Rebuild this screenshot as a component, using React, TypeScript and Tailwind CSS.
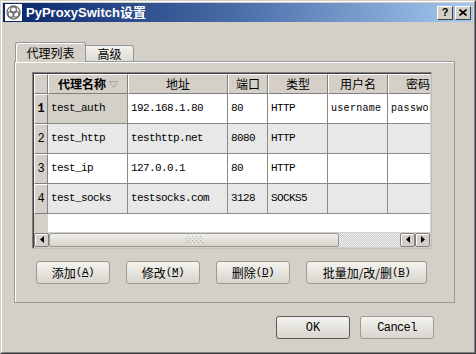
import React from 'react';

const cjk = { fontFamily: '"Noto Sans CJK SC", "Liberation Sans", sans-serif' };
const mono = { fontFamily: '"Liberation Mono", "Noto Sans CJK SC", monospace' };

const columns = [
  { label: '代理名称', w: 'w-[80px]', bold: true },
  { label: '地址', w: 'w-[100px]' },
  { label: '端口', w: 'w-[40px]' },
  { label: '类型', w: 'w-[60px]' },
  { label: '用户名', w: 'w-[60px]' },
  { label: '密码', w: 'w-[60px]' },
];

const rows = [
  ['test_auth', '192.168.1.80', '80', 'HTTP', 'username', 'password'],
  ['test_http', 'testhttp.net', '8080', 'HTTP', '', ''],
  ['test_ip', '127.0.0.1', '80', 'HTTP', '', ''],
  ['test_socks', 'testsocks.com', '3128', 'SOCKS5', '', ''],
];

function RaisedCell({ className = '', children }: { className?: string; children?: React.ReactNode }) {
  return (
    <div
      className={`flex items-center justify-center bg-[#d4d0c8] border-t border-l border-t-white border-l-white border-r border-b border-r-[#808080] border-b-[#808080] ${className}`}
    >
      {children}
    </div>
  );
}

function Arrow({ dir }: { dir: 'left' | 'right' }) {
  return (
    <svg width="4" height="7" viewBox="0 0 4 7">
      {dir === 'left' ? <path d="M4 0 L0 3.5 L4 7 Z" fill="#000" /> : <path d="M0 0 L4 3.5 L0 7 Z" fill="#000" />}
    </svg>
  );
}

function ScrollBtn({ dir }: { dir: 'left' | 'right' }) {
  return (
    <div className="w-[15px] h-[14px] flex items-center justify-center bg-[#d4d0c8] rounded-[2px] border border-[#808080] shadow-[inset_1px_1px_0_#fff]">
      <Arrow dir={dir} />
    </div>
  );
}

function Button({ children, w = 'w-[74px]', primary = false }: { children: React.ReactNode; w?: string; primary?: boolean }) {
  return (
    <div
      className={`${w} h-[23px] flex items-center justify-center rounded-[3px] border ${
        primary ? 'border-[#5a5a5a]' : 'border-[#9c9a94]'
      } bg-gradient-to-b from-[#f4f3ef] to-[#d8d5cd] text-[12px] text-black`}
      style={cjk}
    >
      {children}
    </div>
  );
}

function Mn({ c }: { c: string }) {
  return (
    <span className="text-[11px] tracking-[-0.5px]" style={mono}>
      (<span className="underline">{c}</span>)
    </span>
  );
}

export default function App() {
  return (
    <div className="w-[476px] h-[354px] bg-[#d4d0c8] border-t border-l border-t-[#d4d0c8] border-l-[#d4d0c8] border-r border-b border-r-[#404040] border-b-[#404040] overflow-hidden">
      <div className="h-full border-t border-l border-t-white border-l-white border-r border-b border-r-[#808080] border-b-[#808080] px-[1px] pt-[1px] flex flex-col">
        {/* title bar */}
        <div className="h-[19px] flex items-center bg-gradient-to-r from-[#0a246a] via-[#4a6ea8] to-[#a6caf0] pl-[2px] pr-[2px]">
          <div className="w-[17px] h-[17px] bg-white flex items-center justify-center">
            <svg width="15" height="15" viewBox="0 0 15 15">
              <circle cx="7.5" cy="7.5" r="6.5" fill="none" stroke="#6a6a6a" strokeWidth="1.3" />
              <circle cx="7.5" cy="5" r="3" fill="none" stroke="#6a6a6a" strokeWidth="1.2" />
              <circle cx="5" cy="9.3" r="3" fill="none" stroke="#6a6a6a" strokeWidth="1.2" />
              <circle cx="10" cy="9.3" r="3" fill="none" stroke="#6a6a6a" strokeWidth="1.2" />
            </svg>
          </div>
          <span className="ml-[4px] text-white font-bold text-[13px] leading-none" style={{ fontFamily: '"Liberation Sans", "Noto Sans CJK SC", sans-serif' }}>
            PyProxySwitch设置
          </span>
          <div className="ml-auto flex gap-[2px]">
            <div className="w-[16px] h-[14px] bg-[#d4d0c8] border-t border-l border-t-white border-l-white border-r border-b border-r-[#404040] border-b-[#404040] flex items-center justify-center text-[11px] font-bold leading-none" style={{ fontFamily: '"Liberation Sans", sans-serif' }}>
              ?
            </div>
            <div className="w-[16px] h-[14px] bg-[#d4d0c8] border-t border-l border-t-white border-l-white border-r border-b border-r-[#404040] border-b-[#404040] flex items-center justify-center">
              <svg width="8" height="7" viewBox="0 0 8 7">
                <path d="M0.5 0.5 L7.5 6.5 M7.5 0.5 L0.5 6.5" stroke="#000" strokeWidth="1.6" />
              </svg>
            </div>
          </div>
        </div>

        {/* tabs */}
        <div className="pl-[12px] pt-[20px] flex items-end">
          <div className="w-[71px] h-[20px] bg-[#d4d0c8] border border-b-0 border-[#919b9c] rounded-t-[3px] shadow-[inset_1px_1px_0_#fff] flex items-center justify-center text-[12px] text-black relative z-10 -mb-[1px]" style={cjk}>
            代理列表
          </div>
          <div className="w-[48px] h-[16px] bg-gradient-to-b from-[#f2f1ed] to-[#dedbd3] border border-b-0 border-l-0 border-[#919b9c] rounded-tr-[3px] flex items-center justify-center text-[12px] text-black" style={cjk}>
            高级
          </div>
        </div>

        {/* panel */}
        <div className="ml-[11px] w-[441px] h-[242px] border border-[#919b9c] shadow-[inset_1px_1px_0_#fff] pl-[17px] pt-[10px] flex flex-col">
          {/* table */}
          <div className="w-[400px] h-[177px] border border-[#808080] border-r-[#c0c0c0] border-b-[#c0c0c0] shadow-[inset_1px_1px_0_#404040] p-[1px] flex flex-col bg-[#d4d0c8]">
            <div className="flex-1 flex overflow-hidden">
              <div className="flex flex-col w-[14px] shrink-0">
                <RaisedCell className="h-[20px]" />
                {rows.map((_, i) => (
                  <RaisedCell key={i} className="h-[30px]">
                    <span className={`text-[12px] ${i === 0 ? 'font-bold' : ''}`} style={mono}>
                      {i + 1}
                    </span>
                  </RaisedCell>
                ))}
              </div>
              <div className="flex-1 flex flex-col overflow-hidden bg-white">
                <div className="flex h-[20px] shrink-0">
                  {columns.map((c) => (
                    <RaisedCell key={c.label} className={`${c.w} shrink-0`}>
                      <span className={`text-[12px] text-black ${c.bold ? 'font-bold' : ''}`} style={cjk}>
                        {c.label}
                      </span>
                      {c.bold && (
                        <svg className="ml-[3px]" width="9" height="7" viewBox="0 0 9 7">
                          <path d="M0.5 0.5 L8.5 0.5 L4.5 6.5 Z" fill="none" stroke="#a8a8a8" />
                        </svg>
                      )}
                    </RaisedCell>
                  ))}
                </div>
                {rows.map((r, i) => (
                  <div key={i} className={`flex h-[30px] shrink-0 ${i % 2 === 1 ? 'bg-[#e8e8e8]' : 'bg-white'}`}>
                    {r.map((v, j) => (
                      <div
                        key={j}
                        className={`${columns[j].w} shrink-0 border-r border-b border-[#8a8a8a] flex items-center pl-[3px] overflow-hidden whitespace-nowrap ${
                          i === 0 && j === 0 ? 'bg-[#d4d0c8]' : ''
                        }`}
                      >
                        <span className={`${j === 4 || j === 5 ? 'text-[10px] tracking-[0.3px]' : 'text-[11px] tracking-[-0.6px]'} text-black`} style={mono}>
                          {v}
                        </span>
                      </div>
                    ))}
                  </div>
                ))}
              </div>
            </div>
            {/* horizontal scrollbar */}
            <div className="h-[15px] flex items-center bg-[#d4d0c8] shrink-0">
              <ScrollBtn dir="left" />
              <div className="w-[290px] h-[14px] rounded-[2px] border border-[#9c9a94] bg-gradient-to-b from-[#f0efeb] to-[#d6d3cb] flex items-center justify-center">
                <svg width="18" height="8" viewBox="0 0 18 8">
                  {[0, 1, 2, 3].map((row) =>
                    [0, 1, 2, 3, 4].map((col) => (
                      <rect key={`${row}-${col}`} x={col * 4 + (row % 2) * 2 - 1} y={row * 2} width="1" height="1" fill="#a8a8a8" />
                    ))
                  )}
                </svg>
              </div>
              <div className="flex-1 h-[14px] bg-[repeating-conic-gradient(#c8c8c8_0_25%,#f4f4f4_0_50%)] bg-[length:2px_2px]" />
              <ScrollBtn dir="left" />
              <ScrollBtn dir="right" />
            </div>
          </div>

          {/* action buttons */}
          <div className="flex gap-[16px] mt-[12px] ml-[4px]">
            <Button>
              添加<Mn c="A" />
            </Button>
            <Button>
              修改<Mn c="M" />
            </Button>
            <Button>
              删除<Mn c="D" />
            </Button>
            <Button w="w-[121px]">
              批量加/改/删<Mn c="B" />
            </Button>
          </div>
        </div>

        {/* dialog buttons */}
        <div className="flex justify-end gap-[10px] pr-[39px] mt-[13px]">
          <Button primary>
            <span className="text-[12px]" style={mono}>OK</span>
          </Button>
          <Button>
            <span className="text-[12px] tracking-[-0.6px]" style={mono}>Cancel</span>
          </Button>
        </div>
      </div>
    </div>
  );
}
